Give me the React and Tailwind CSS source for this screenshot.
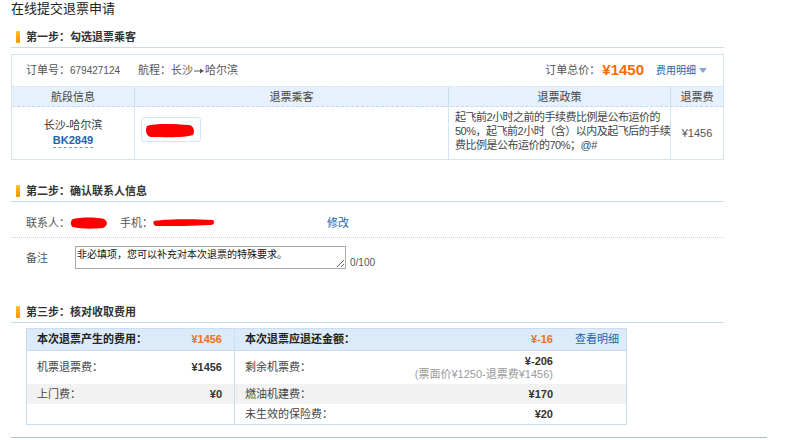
import React from 'react';

const FONT = { fontFamily: '"Liberation Sans", "Noto Sans CJK SC", sans-serif' };

/* ──── Step heading with orange marker ──── */
const StepTitle = ({ children, className = '' }) => (
  <div className={`pb-[3px] border-b border-[#c8dcf0] ${className}`}>
    <div className="flex items-center h-[14px] pl-[5px] gap-[6px]">
      <span className="w-[4px] h-[12px] rounded-[1px] bg-gradient-to-b from-[#ffc21a] to-[#f59300]" />
      <span className="text-[11px] font-bold text-[#333] leading-[14px]">{children}</span>
    </div>
  </div>
);

/* ──── Red marker scribble (redacted name) ──── */
const Scribble = ({ w, h, d }) => (
  <svg width={w} height={h} viewBox={`0 0 ${w} ${h}`} className="block">
    <path d={d} fill="#ff0000" />
  </svg>
);

const Arrow = () => (
  <svg width="10" height="6" viewBox="0 0 10 6" className="inline-block mx-[1px] align-middle">
    <path d="M0 3h7" stroke="#555" strokeWidth="1" />
    <path d="M6 0.5L10 3 6 5.5z" fill="#555" />
  </svg>
);

const Yen = ({ children, className = '' }) => <span className={className}>¥{children}</span>;

export default function App() {
  return (
    <div className="w-[802px] h-[440px] bg-white text-[#333] text-[11px] overflow-hidden" style={FONT}>
      <div className="w-[713px] ml-[11px]">
        {/* ──── Page title ──── */}
        <div className="h-[18px] leading-[18px] text-[13px] text-[#222]">在线提交退票申请</div>

        {/* ──── Step 1 ──── */}
        <StepTitle className="mt-[12px]">第一步：勾选退票乘客</StepTitle>

        <div className="mt-[6px] border border-[#d3e4f4]">
          <div className="h-[31px] flex items-center pl-[14px] pr-[16px]">
            <span className="text-[#555]">订单号：<span className="text-[10px]">679427124</span></span>
            <span className="ml-[18px] text-[#555] flex items-center">航程：长沙<Arrow />哈尔滨</span>
            <span className="ml-auto text-[#555]">订单总价：</span>
            <Yen className="text-[15px] font-bold text-[#ff6a00] ml-[2px]">1450</Yen>
            <span className="ml-[12px] text-[10px] text-[#1f5fa8] flex items-center gap-[3px]">
              费用明细
              <svg width="8" height="5" viewBox="0 0 8 5"><path d="M0 0h8L4 5z" fill="#7fa6d4" /></svg>
            </span>
          </div>

          <div className="flex h-[21px] bg-[#e6f1fd] border-t border-[#d3e4f4] border-b border-b-[#c4d8ee] border-dashed text-[#444] leading-[20px] text-center">
            <div className="w-[123px] border-r border-solid border-[#c8dcf0]">航段信息</div>
            <div className="w-[314px] border-r border-solid border-[#c8dcf0]">退票乘客</div>
            <div className="w-[222px] border-r border-solid border-[#c8dcf0]">退票政策</div>
            <div className="flex-1">退票费</div>
          </div>

          <div className="flex h-[52px]">
            <div className="w-[123px] border-r border-[#d3e4f4] flex flex-col items-center pt-[10px]">
              <span className="leading-[16px] text-[#333]">长沙-哈尔滨</span>
              <span className="leading-[14px] text-[11px] font-bold text-[#2164b0] border-b border-dashed border-[#6f98c9]">BK2849</span>
            </div>
            <div className="w-[314px] border-r border-[#d3e4f4] pl-[6px] pt-[10px]">
              <div className="w-[60px] h-[25px] rounded-[3px] border border-[#d3e4f4] flex items-center pl-[3px]">
                <Scribble w={50} h={16} d="M2 4 C10 1 30 2 44 3 C49 4 50 9 48 13 C40 16 20 15 6 15 C1 14 0 8 2 4 Z" />
              </div>
            </div>
            <div className="w-[222px] border-r border-[#d3e4f4] pl-[6px] pt-[3px] leading-[14px] text-[#444] whitespace-nowrap tracking-[-0.5px]">
              <div>起飞前2小时之前的手续费比例是公布运价的</div>
              <div>50%，起飞前2小时（含）以内及起飞后的手续</div>
              <div>费比例是公布运价的70%；@#</div>
            </div>
            <div className="flex-1 flex items-center justify-center text-[#555]">¥1456</div>
          </div>
        </div>

        {/* ──── Step 2 ──── */}
        <StepTitle className="mt-[24px]">第二步：确认联系人信息</StepTitle>

        <div className="flex items-center pt-[13px] pb-[6px] pl-[15px] leading-[16px] border-b border-dotted border-[#cfcfcf]">
          <span className="text-[#555]">联系人：</span>
          <Scribble w={38} h={12} d="M3 2 C12 0 26 0 34 2 C38 4 38 9 33 11 C24 12 10 12 3 10 C0 8 0 4 3 2 Z" />
          <span className="ml-[12px] text-[#555]">手机：</span>
          <Scribble w={62} h={8} d="M1 2 C15 0 40 0 60 1 C62 3 61 6 58 6 C40 7 20 7 3 7 C0 6 0 3 1 2 Z" />
          <span className="ml-[112px] text-[#2164b0]">修改</span>
        </div>

        <div className="flex items-start pl-[15px] pt-[8px]">
          <span className="w-[49px] pt-[4px] leading-[16px] text-[#555]">备注</span>
          <textarea
            readOnly
            defaultValue="非必填项，您可以补充对本次退票的特殊要求。"
            className="w-[271px] h-[23px] border border-[#a9a9a9] text-[10px] leading-[14px] px-[1px] py-[1px] text-[#111] resize-y outline-none"
            style={FONT}
          />
          <span className="self-end ml-[4px] text-[10px] text-[#555] leading-[12px]">0/100</span>
        </div>

        {/* ──── Step 3 ──── */}
        <StepTitle className="mt-[36px]">第三步：核对收取费用</StepTitle>

        <div className="mt-[5px] ml-[15px] w-[601px] border border-[#c9dcf0] flex">
          <div className="w-[208px] border-r border-[#c9dcf0] flex flex-col">
            <div className="h-[21px] bg-[#dcebfa] flex items-center justify-between pl-[10px] pr-[12px] font-bold text-[#222]">
              <span>本次退票产生的费用：</span>
              <Yen className="text-[#f07020]">1456</Yen>
            </div>
            <div className="h-[34px] flex items-center justify-between pl-[10px] pr-[12px] border-t border-[#c9dcf0]">
              <span className="text-[#444]">机票退票费：</span>
              <Yen className="font-bold text-[#333]">1456</Yen>
            </div>
            <div className="h-[20px] bg-[#f2f2f2] flex items-center justify-between pl-[10px] pr-[12px]">
              <span className="text-[#444]">上门费：</span>
              <Yen className="font-bold text-[#333]">0</Yen>
            </div>
            <div className="h-[20px]" />
          </div>
          <div className="flex-1 flex flex-col">
            <div className="h-[21px] bg-[#dcebfa] flex items-center pl-[10px]">
              <span className="flex-1 font-bold text-[#222]">本次退票应退还金额：</span>
              <Yen className="font-bold text-[#f07020]">-16</Yen>
              <span className="w-[73px] pl-[22px] text-[#2164b0]">查看明细</span>
            </div>
            <div className="h-[34px] flex items-center pl-[10px] border-t border-[#c9dcf0]">
              <span className="flex-1 text-[#444]">剩余机票费：</span>
              <div className="flex flex-col items-end leading-[13px]">
                <Yen className="font-bold text-[#333]">-206</Yen>
                <span className="text-[#999]">(票面价¥1250-退票费¥1456)</span>
              </div>
              <span className="w-[73px]" />
            </div>
            <div className="h-[20px] bg-[#f2f2f2] flex items-center pl-[10px]">
              <span className="flex-1 text-[#444]">燃油机建费：</span>
              <Yen className="font-bold text-[#333]">170</Yen>
              <span className="w-[73px]" />
            </div>
            <div className="h-[20px] flex items-center pl-[10px]">
              <span className="flex-1 text-[#444]">未生效的保险费：</span>
              <Yen className="font-bold text-[#333]">20</Yen>
              <span className="w-[73px]" />
            </div>
          </div>
        </div>
      </div>

      {/* ──── Bottom rule ──── */}
      <div className="mt-[12px] ml-[11px] w-[756px] border-t border-[#aebfd4]" />
    </div>
  );
}
